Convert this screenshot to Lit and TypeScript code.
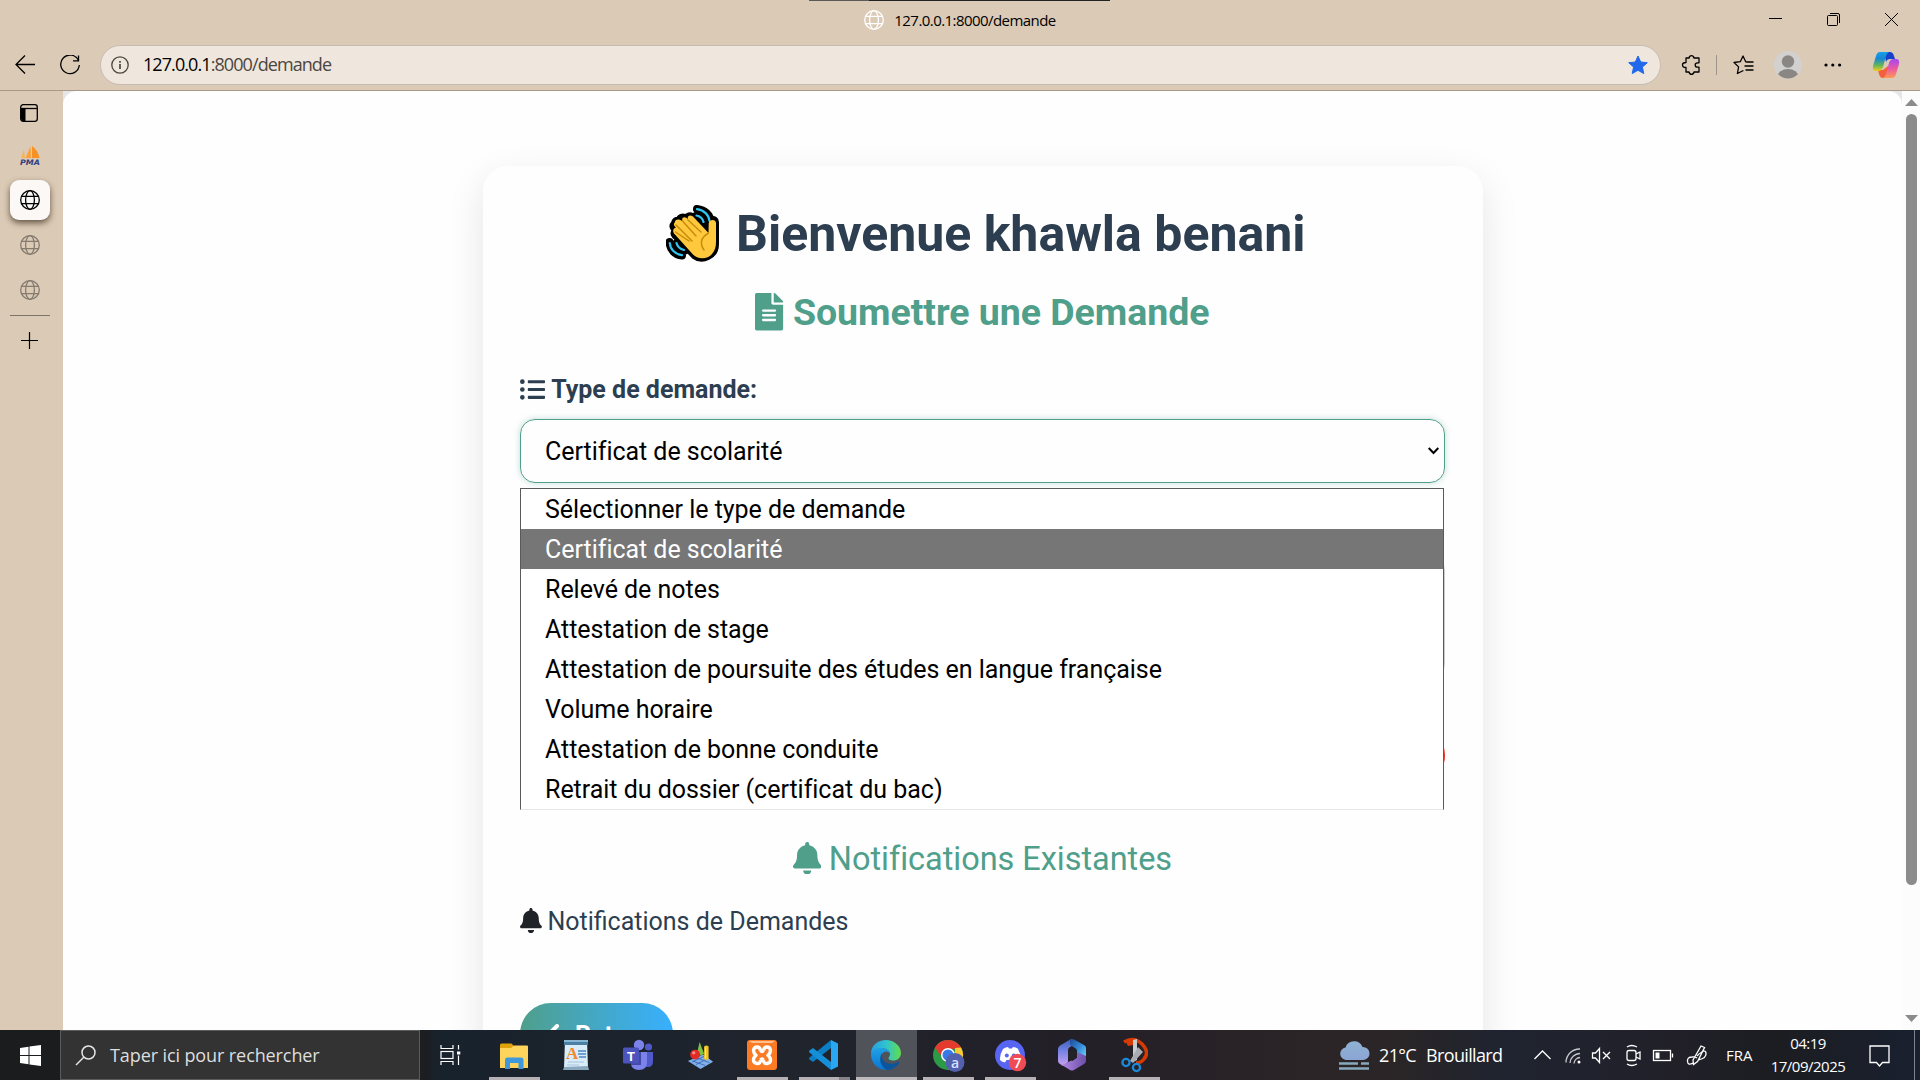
import { LitElement, html, css, TemplateResult } from "lit";
import { customElement, property, state } from "lit/decorators.js";
import { classMap } from "lit/directives/class-map.js";

const globe = html`<svg class="globe" width="20" height="20" viewBox="0 0 20 20" fill="none" stroke="currentColor" stroke-width="1.3">
  <circle cx="10" cy="10" r="9.3" /><ellipse cx="10" cy="10" rx="4.4" ry="9.3" /><path d="M1.4 6.4h17.2M1.4 13.6h17.2" />
</svg>`;

const bell = html`<svg class="fa bell" viewBox="0 0 448 512" fill="currentColor"><path d="M224 512c35.32 0 63.97-28.65 63.97-64H160.03c0 35.35 28.65 64 63.97 64zm215.39-149.71c-19.32-20.76-55.47-51.99-55.47-154.29 0-77.7-54.48-139.9-127.94-155.16V32c0-17.67-14.32-32-31.98-32s-31.98 14.33-31.98 32v20.84C118.56 68.1 64.08 130.3 64.08 208c0 102.3-36.15 133.53-55.47 154.29-6 6.45-8.66 14.16-8.61 21.71.11 16.4 12.98 32 32.1 32h383.8c19.12 0 32-15.6 32.1-32 .05-7.55-2.61-15.27-8.61-21.71z"/></svg>`;

const wave = html`<svg class="wave" width="53" height="57" viewBox="0 0 53 57" fill="none" stroke-linecap="round" stroke-linejoin="round">
  <g stroke="#000" stroke-width="8"><path d="M31 4C39 5 44 10 45 17M30 11C34 12 37 14 38 18M3.500 37C4 45 9 50 16 50.500M11 38C12 42 14 44 19 45.500" /></g>
  <path d="M8 18C5 21 7 24 9 25C6 28 8 31 11 33L28 51C36 57 50 52 50 39V17C50 13 43 13 43 18V26L26 11C23 9 20 12 20 13C17 10 13 12 13 15C10 14 8 16 8 18Z" fill="#000" stroke="#000" stroke-width="6" />
  <g stroke="#31c4f1" stroke-width="2.2"><path d="M31 4.200C38 5 43 10 43.500 16M30.500 10.500C34 11 37 14 37.500 17M3.800 38C4 44 9 49.500 16 50.200M10.500 38C11.500 42 14 44 18 45" /></g>
  <path d="M9 17C7 19 8 21 10 22.500C7 23 6 27 9 29.500L27 49.500C31 54 41 55 46 49C49 45.500 50 42 50 37V18C50 14 43 14 42.700 18.500L42.500 28L27 11.500C24 9 20.500 11 22 14.500C19 10.500 15 12.500 16.500 16C13 13.500 9 14 9 17Z" fill="#ffc83d" />
  <path d="M22 15L35 27M16.500 16L30 31M10 20L26 36M9.500 27L23 36M42.500 28C34 33 34 39 38 45" stroke="#c98b0a" stroke-width="1.500" />
</svg>`;

const apps: Record<string, TemplateResult> = {
  explorer: html`<svg width="30" height="30" viewBox="0 0 30 30"><path d="M1 5q0-1.500 1.500-1.500h10L15 6v5H1z" fill="#e0a10a"/><path d="M1 8h11l3-2.500h13q1 0 1 1V28H1z" fill="#ffd45c"/><path d="M6 29V20q0-2.500 2.500-2.500h13.500q2.500 0 2.500 2.500v9h-5v-6H11v6z" fill="#3f97dc"/></svg>`,
  wordpad: html`<svg width="28" height="34" viewBox="0 0 28 34"><path d="M3 2h22l1 28H2z" fill="#d8ecfa"/><path d="M2 2h24v5H2z" fill="#4b7fa6"/><path d="M2 2h24v2H2z" fill="#86b6d4"/><path d="M2 29l24-1 1 4H1z" fill="#8aa9bf"/><path d="M16 13h8M16 16h8M17 19h7" stroke="#4b86c5" stroke-width="1.500"/><path d="M6 24h16M5 27h12" stroke="#a9c4db"/><text x="4" y="21" font-family="Liberation Serif,serif" font-size="17" font-weight="700" fill="#f08a2c">A</text></svg>`,
  teams: html`<svg width="32" height="32" viewBox="0 0 32 32"><circle cx="17" cy="6" r="5.200" fill="#7b83eb"/><circle cx="26.500" cy="8" r="3.600" fill="#5059c9"/><path d="M21 13h10v9q0 6-5 6t-5-4z" fill="#5059c9"/><path d="M9 13h16v10q0 8-8 8t-8-7z" fill="#7b83eb"/><path d="M9 13h10v13H9z" fill="#4149a4"/><rect x="1" y="8.500" width="16" height="16" rx="1.500" fill="#4b53bc"/><text x="9" y="21.500" text-anchor="middle" font-family="Liberation Sans,sans-serif" font-size="13" font-weight="700" fill="#fff">T</text></svg>`,
  shapes: html`<svg width="27" height="27" viewBox="0 0 30 30"><path d="M1 21l17-7 11 8-14 8z" fill="#7fb0ea"/><path d="M6 21l14 5M12 18l13 5M10 25l14-7M6 22l13-6" stroke="#3c68b2"/><path d="M14 0l5 13q-5 4-8 0z" fill="#7dc242"/><circle cx="9" cy="14" r="5.500" fill="#e22b27"/><circle cx="7.500" cy="12" r="1.800" fill="#ff8c80"/><path d="M19 5q2.500-2 5 0v14q-2.500 2-5 0z" fill="#f4c327"/><path d="M20.500 6v12" stroke="#fff0a0"/></svg>`,
  xampp: html`<svg width="32" height="32" viewBox="0 0 32 32"><rect x="1" y="1" width="30" height="30" rx="3" fill="#fb7a24"/><path d="M3 2h26l-3 2H6z" fill="#ffc08f"/><path d="M14.500 11.500Q14 8 11 8T7.500 11.500Q7.500 14 10 16.300 7.500 18 7.500 21T11 24.500 14.500 21M17.500 11.500Q18 8 21 8t3.500 3.500q0 2.500-2.500 4.800 2.500 1.700 2.500 4.700T21 24.500 17.500 21M14.500 11.500q1.500 2 3 0M14.500 21q1.500-2 3 0" fill="none" stroke="#fff" stroke-width="3.400" stroke-linejoin="round"/></svg>`,
  vscode: html`<svg width="32" height="32" viewBox="0 0 32 32"><path d="M23 1L30 4.500v23L23 31z" fill="#2aa7f2"/><path d="M23 1v8L5 23 1.500 20.500q-1-1 0-2z" fill="#0b7ec4"/><path d="M23 31v-8L5 9 1.500 11.500q-1 1 0 2z" fill="#1590d8"/></svg>`,
  edge: html`<svg width="32" height="32" viewBox="0 0 32 32"><defs><linearGradient id="e1"><stop stop-color="#2a9de0"/><stop offset=".5" stop-color="#2fc3cf"/><stop offset="1" stop-color="#62dd4c"/></linearGradient><linearGradient id="e2" x2="0" y2="1"><stop stop-color="#1fa2e6"/><stop offset="1" stop-color="#0c74d0"/></linearGradient></defs><path d="M1 15C1 6 8 1 16 1s15 6 15 13c0 5-4 7.500-7.500 7.500-4 0-5-1.500-5-2.500 0-.7 1.500-1.500 1.500-4 0-3-3-5.500-7-5.500-6 0-12 3.500-12 5.500z" fill="url(#e1)"/><path d="M1 15c0-4 6-6 10-6 5 0 9 3 9 6-.5-1.500-2-2.500-4-2.500-4 0-5.500 5-4 9.500 1.500 4.800 5 8 8.500 8.300C10 33 1 26 1 15z" fill="url(#e2)"/><path d="M12 14c-1.500 8 6 14 16 9 1.500-.6 1.700.2 1 1.200C26 28 22 31 17.500 31 11 29 8 20 12 14z" fill="#0b559f"/></svg>`,
  chrome: html`<svg width="32" height="36" viewBox="0 0 32 36" overflow="visible"><circle cx="16" cy="18" r="15" fill="#2c9b48"/><g transform="translate(0 2)"><path d="M3 8.500A15 15 0 0 1 29 8.500L30 10H16L8 16z" fill="#e33b2e"/><path d="M29 8.500A15 15 0 0 1 16 31l7-12V9z" fill="#fcc934"/><circle cx="16" cy="16" r="7" fill="#fff"/><circle cx="16" cy="16" r="5.500" fill="#3b78e7"/><circle cx="23" cy="23.500" r="9.500" fill="#5261ad"/><text x="23" y="28.500" text-anchor="middle" font-family="Open Sans,sans-serif" font-size="14" font-weight="600" fill="#dbe1ff">a</text></g></svg>`,
  discord: html`<svg width="32" height="36" viewBox="0 0 32 36" overflow="visible"><g transform="translate(0 2)"><circle cx="16" cy="16" r="15" fill="#5865f2"/><path d="M9 10q3-2 5-2l1 1.500h3L19 8q3 0 5 2 3.500 6 3 11-2 2-5 2.500L20.500 21h-8L11 23.500Q8 23 6 21q-.5-5 3-11z" fill="#fff"/><circle cx="12.800" cy="16.500" r="2" fill="#5865f2"/><circle cx="19.800" cy="16.500" r="2" fill="#5865f2"/><circle cx="23.500" cy="23.500" r="8.700" fill="#ee4b54"/><text x="23.500" y="28.500" text-anchor="middle" font-family="Open Sans,sans-serif" font-size="14" font-weight="600" fill="#fff">7</text></g></svg>`,
  m365: html`<svg width="30" height="34" viewBox="0 0 30 34"><defs><linearGradient id="m1" x2="0" y2="1"><stop stop-color="#3d5fb8"/><stop offset=".4" stop-color="#6f7fe0"/><stop offset="1" stop-color="#c9a3f0"/></linearGradient><linearGradient id="m2" x2="1" y2="1"><stop stop-color="#1b4a94"/><stop offset=".5" stop-color="#3589d8"/><stop offset="1" stop-color="#6fdcf8"/></linearGradient><linearGradient id="m3" x2="1" y2="0"><stop stop-color="#b58ae6"/><stop offset="1" stop-color="#6a4fa8"/></linearGradient></defs><path d="M14 1L3 7.500Q1 9 1 11v12q0 2 2 3l3 2 5-4V12q0-2 2-3l7-4z" fill="url(#m1)"/><path d="M13 1.500q2-1 4 0L27 7q2 1 2 3v11l-9-5v-3q0-2-2-3l-5-3z" fill="url(#m2)"/><path d="M29 18v5q0 2-2 3l-10 6q-2 1-4 0L4 26.500q4 0 7-2.500l7-3q2-1 2-3v-4z" fill="url(#m3)"/><path d="M11 14l4.500-3.500L20 14v5.500L15.500 23 11 20z" fill="#222229"/></svg>`,
  snip: html`<svg width="28" height="36" viewBox="0 0 28 36"><path d="M4 5Q14-1 22 7t2 15q-3 4-8 4" fill="none" stroke="#d83b01" stroke-width="3.500"/><path d="M5 3l8-1v6L8 9z" fill="#d83b01"/><path d="M13 3l4-1v21l-4 2z" fill="#c9ccd0"/><path d="M18 10l5 5-10 11-3-2z" fill="#a9adb3"/><g fill="none" stroke="#1b8ad8" stroke-width="2.300"><circle cx="6" cy="25.500" r="3.600"/><circle cx="16.500" cy="30.500" r="3.600"/></g></svg>`,
};

/** Left rail with vertical tabs. */
@customElement("tab-rail")
class TabRail extends LitElement {
  static styles = css`
    :host { display: flex; flex-direction: column; align-items: center; width: 63px; height: 939px; padding: 3px 3px 0 0; box-sizing: border-box; background: #dbcab6; color: #000; flex: none; }
    .item { width: 40px; height: 40px; margin-bottom: 5px; display: flex; align-items: center; justify-content: center; border-radius: 9px; flex: none; }
    .layout { margin-bottom: 1px; height: 38px; padding-right: 2px; }
    .pma { height: 42px; margin-bottom: 5px; padding-top: 1px; box-sizing: border-box; }
    .active { background: #fbf8f5; box-shadow: 0 3px 6px rgba(60, 45, 30, 0.75); }
    .idle { color: #857b6f; }
    .rule { width: 40px; height: 1px; background: #7d7367; margin-bottom: 4px; }
    .add { padding-right: 2px; }
    svg { display: block; }
  `;
  render() {
    return html`
      <div class="item layout"><svg width="18" height="18" viewBox="0 0 18 18" fill="none" stroke="#000"><rect x=".7" y=".7" width="16.600" height="16.600" rx="2.500" stroke-width="1.300"/><path d="M1 4.500h16" stroke-width="1.300"/><path d="M1 5h4.500v12.500h-2Q1 17 1 15z" fill="#000" stroke="none"/></svg></div>
      <div class="item pma"><svg width="22" height="20" viewBox="0 0 22 20"><path d="M2 13L5 4.500 6 13z" fill="#f6b25c"/><path d="M6.500 13L11.500 1 12 13z" fill="#f9a13b"/><path d="M13 1Q19 5 20.500 13H13z" fill="#f79226"/><text x="1" y="19.500" font-family="DejaVu Sans,sans-serif" font-size="7.500" font-weight="700" font-style="italic" fill="#35407f" textLength="20" lengthAdjust="spacingAndGlyphs">PMA</text></svg></div>
      <div class="item active">${globe}</div>
      <div class="item idle">${globe}</div>
      <div class="item idle">${globe}</div>
      <div class="rule"></div>
      <div class="item add"><svg width="17" height="17" viewBox="0 0 17 17" stroke="#000" stroke-width="1.200"><path d="M8.500 0v17M0 8.500h17"/></svg></div>
    `;
  }
}

/** Title bar and address bar of the browser window. */
@customElement("browser-chrome")
class BrowserChrome extends LitElement {
  static styles = css`
    :host { display: block; height: 91px; box-sizing: border-box; border-bottom: 1px solid #ab9885; background: #dbcab6; font-family: "Open Sans", "Segoe UI", sans-serif; color: #000; }
    svg { display: block; flex: none; }
    .top { height: 45px; position: relative; display: flex; align-items: flex-start; justify-content: center; }
    .edge { position: absolute; left: 809px; top: 0; width: 301px; height: 1px; background: linear-gradient(90deg, #5c5a57 60px, #222 60px); }
    .title { display: flex; align-items: center; gap: 10px; height: 40px; font-size: 15px; letter-spacing: -0.56px; }
    .title .globe { color: #fff; }
    .controls { position: absolute; right: 22px; top: 13px; }
    .bar { height: 40px; display: flex; align-items: center; padding-left: 15px; }
    .refresh { margin-left: 25px; }
    .address { margin-left: 20px; width: 1561px; height: 40px; box-sizing: border-box; border: 1px solid #c6bcb2; border-radius: 20px; background: #efe7de; display: flex; align-items: center; padding: 0 12px 0 10px; font-size: 18px; letter-spacing: -0.92px; color: #4b4641; }
    .url { flex: 1; margin-left: 14px; padding-bottom: 2px; white-space: nowrap; }
    .host { color: #000; }
    .ext { margin-left: 20px; }
    .sep { width: 1px; height: 20px; background: #a0958a; margin-left: 15px; }
    .fav { margin-left: 16px; }
    .avatar { margin-left: 20px; }
    .more { margin-left: 22px; }
    .copilot { margin-left: 30px; }
  `;
  render() {
    return html`
      <div class="top">
        <div class="edge"></div>
        <div class="title">${globe}<span>127.0.0.1:8000/demande</span></div>
        <svg class="controls" width="129" height="13" viewBox="0 0 129 13" fill="none" stroke="#000" stroke-width="1">
          <path d="M0 5.500h13"/><rect x="58.500" y="2.500" width="10" height="10" rx="1"/><path d="M61 .500h8q1.500 0 1.500 1.500v8"/><path d="M116 0l13 13M129 0l-13 13"/>
        </svg>
      </div>
      <div class="bar">
        <svg width="20" height="20" viewBox="0 0 20 20" fill="none" stroke="#000" stroke-width="1.300"><path d="M20 9.500H1M10 .500L1 9.500l9 9"/></svg>
        <svg class="refresh" width="20" height="20" viewBox="0 0 20 20" fill="none" stroke="#000" stroke-width="1.300"><path d="M18.500 5.500A9.300 9.300 0 1 0 19.300 10M18.500.500v5.300h-5.500"/></svg>
        <div class="address">
          <svg width="18" height="18" viewBox="0 0 18 18" fill="none" stroke="#4b4641" stroke-width="1.300"><circle cx="9" cy="9" r="8.200"/><path d="M9 8v5M9 5v1.700" stroke-width="1.700"/></svg>
          <span class="url"><span class="host">127.0.0.1</span>:8000/demande</span>
          <svg width="20" height="20" viewBox="0 0 20 20" fill="#2169eb" stroke="#2169eb" stroke-linejoin="round"><path d="M10 1l2.700 6 6.600.700-4.900 4.400 1.400 6.500-5.800-3.300-5.800 3.300 1.400-6.500L.700 7.700 7.300 7z"/></svg>
        </div>
        <svg class="ext" width="20" height="20" viewBox="0 0 20 20" fill="none" stroke="#000" stroke-width="1.300" stroke-linejoin="round"><path d="M5 3h3q.500-2.300 2.500-2.300T13 3h5v4.800h-1.500q-2.300 0-2.300 2.200t2.300 2.200H18V17h-5q-.500 2.300-2.500 2.300T8 17H5v-4.500Q1.500 12.500 1.500 10T5 7.500z"/></svg>
        <div class="sep"></div>
        <svg class="fav" width="21" height="20" viewBox="0 0 21 20" fill="none" stroke="#000" stroke-width="1.300" stroke-linejoin="round"><path d="M15 6.800h-2.300L10 1 7.300 6.700 1 7.500l4.600 4.400-1.200 6.600 6-3M11.500 11h9M13.500 7h7M12.500 15h8"/></svg>
        <svg class="avatar" width="28" height="28" viewBox="0 0 28 28"><defs><clipPath id="av"><circle cx="14" cy="14" r="13.500"/></clipPath></defs><circle cx="14" cy="14" r="14" fill="#d2d1cf"/><g fill="#8a8683" clip-path="url(#av)"><circle cx="14" cy="10.500" r="6.200"/><ellipse cx="14" cy="25.500" rx="10.500" ry="7.500"/></g></svg>
        <svg class="more" width="18" height="4" viewBox="0 0 18 4"><circle cx="2" cy="2" r="1.600"/><circle cx="8.800" cy="2" r="1.600"/><circle cx="15.600" cy="2" r="1.600"/></svg>
        <svg class="copilot" width="28" height="28" viewBox="0 0 28 28"><defs><linearGradient id="c1" x2="0" y2="1"><stop stop-color="#17a0e8"/><stop offset=".35" stop-color="#1787d4"/><stop offset=".7" stop-color="#63b557"/><stop offset="1" stop-color="#f5cc1c"/></linearGradient><linearGradient id="c2" x2="0" y2="1"><stop stop-color="#a347f5"/><stop offset=".5" stop-color="#ea58a5"/><stop offset="1" stop-color="#ff9a52"/></linearGradient></defs><path d="M12 1h6q3 0 4 4l1 3h-5q-3 0-4 3z" fill="#1841c9"/><path d="M16 27h-5q-3 0-4-4l-1-4h5l5-4z" fill="#f4603b"/><path d="M8 1h9q-2 1-3 4l-3 11q-1 4-5 4H4q-4 0-3-5L4 5Q5 1 8 1z" fill="url(#c1)"/><path d="M20 27h-9q2-1 3-4l3-11q1-4 5-4h2q4 0 3 5l-3 10q-1 4-4 4z" fill="url(#c2)"/></svg>
      </div>
    `;
  }
}

/** Card with the request form. */
@customElement("request-page")
class RequestPage extends LitElement {
  @state() private selected = 1;
  private options = [
    "Sélectionner le type de demande", "Certificat de scolarité", "Relevé de notes", "Attestation de stage",
    "Attestation de poursuite des études en langue française", "Volume horaire", "Attestation de bonne conduite",
    "Retrait du dossier (certificat du bac)",
  ];
  static styles = css`
    :host { display: flex; justify-content: center; flex: 1; height: 939px; overflow: hidden; box-sizing: border-box; padding-top: 75px; background: #fefefe; border-radius: 14px 14px 0 0; font-family: Roboto, sans-serif; color: #2c3e50; }
    .card { width: 1000px; height: 1100px; box-sizing: border-box; padding: 37.5px 38px 37.5px 37px; margin-left: 1px; border-radius: 25px; background: #fefefe; box-shadow: 0 12.5px 37.5px rgba(0, 0, 0, 0.1); display: flex; flex-direction: column; flex: none; }
    .fa { height: 1em; flex: none; display: block; }
    h1, h2, h3, h4, label { margin: 0; display: flex; align-items: center; font-weight: 400; white-space: nowrap; }
    h1 { font-size: 50px; line-height: 60px; font-weight: 700; justify-content: center; padding-left: 6px; color: #2c3e50; }
    .wave { margin: 0 17.5px 0 0; flex: none; }
    h2 span, h3 span, h4 span, label span, .value { padding-top: 2px; }
    h2 { font-size: 37.5px; line-height: 45px; font-weight: 700; justify-content: center; gap: 9.3px; margin-top: 24.8px; color: #4f9f8b; letter-spacing: -0.04px; }
    label { font-size: 25px; line-height: 37.5px; font-weight: 700; gap: 6.2px; margin-top: 34px; }
    .picker { position: relative; margin-top: 10px; height: 64px; box-sizing: border-box; border: 1px solid #4f9f8b; border-radius: 15px; box-shadow: 0 0 6px rgba(79, 159, 139, 0.35); padding: 0 5px 0 24px; display: flex; align-items: center; justify-content: space-between; font-size: 25px; letter-spacing: -0.03px; color: #000; }
    .options { position: absolute; z-index: 2; left: -1px; top: 68px; width: 924px; height: 322px; box-sizing: border-box; border: 1px solid #5a5a5a; border-bottom-color: #e5e5e5; background: #fff; }
    .option { height: 40px; line-height: 42px; padding-left: 24px; white-space: nowrap; }
    .option.on { background: #767676; color: #fff; }
    .note { margin-top: 72px; height: 124px; box-sizing: border-box; border: 1px solid #ccc; border-radius: 15px; }
    .send { margin-top: 48px; height: 57px; border-radius: 29px; background: #ee2a16; }
    h3 { font-size: 32.5px; line-height: 40px; justify-content: center; gap: 7.5px; margin-top: 53px; color: #4f9f8b; letter-spacing: -0.04px; }
    h4 { font-size: 25px; line-height: 30px; gap: 5.5px; margin-top: 26px; }
    h4 .bell { color: #1f2327; }
    .back { margin-top: 66px; width: 153px; height: 62px; border-radius: 31px; background: linear-gradient(90deg, #4f9f8b, #38b0ff); display: flex; align-items: center; padding: 4px 0 0 26px; gap: 15px; box-sizing: border-box; color: #fff; font-weight: 700; font-size: 25px; flex: none; }
    .back svg { margin-top: -4px; }
  `;
  render() {
    return html`
      <section class="card">
        <h1>${wave}<span class="name">Bienvenue khawla benani</span></h1>
        <h2><svg class="fa" viewBox="0 0 384 512" fill="currentColor"><path d="M224 136V0H24C10.700 0 0 10.700 0 24v464c0 13.300 10.700 24 24 24h336c13.300 0 24-10.700 24-24V160H248c-13.200 0-24-10.800-24-24zm64 236c0 6.600-5.400 12-12 12H108c-6.600 0-12-5.400-12-12v-8c0-6.600 5.400-12 12-12h168c6.600 0 12 5.400 12 12v8zm0-64c0 6.600-5.400 12-12 12H108c-6.600 0-12-5.400-12-12v-8c0-6.600 5.400-12 12-12h168c6.600 0 12 5.400 12 12v8zm0-72v8c0 6.600-5.400 12-12 12H108c-6.600 0-12-5.400-12-12v-8c0-6.600 5.400-12 12-12h168c6.600 0 12 5.400 12 12zm96-114.100v6.100H256V0h6.100c6.400 0 12.500 2.500 17 7l97.900 98c4.500 4.500 7 10.600 7 16.900z"/></svg><span>Soumettre une Demande</span></h2>
        <label><svg class="fa" viewBox="0 0 512 512" fill="currentColor"><path d="M48 48a48 48 0 1 0 48 48 48 48 0 0 0-48-48zm0 160a48 48 0 1 0 48 48 48 48 0 0 0-48-48zm0 160a48 48 0 1 0 48 48 48 48 0 0 0-48-48zm448 16H176a16 16 0 0 0-16 16v32a16 16 0 0 0 16 16h320a16 16 0 0 0 16-16v-32a16 16 0 0 0-16-16zm0-320H176a16 16 0 0 0-16 16v32a16 16 0 0 0 16 16h320a16 16 0 0 0 16-16V80a16 16 0 0 0-16-16zm0 160H176a16 16 0 0 0-16 16v32a16 16 0 0 0 16 16h320a16 16 0 0 0 16-16v-32a16 16 0 0 0-16-16z"/></svg><span>Type de demande:</span></label>
        <div class="picker">
          <span class="value">${this.options[this.selected]}</span>
          <svg width="11" height="8" viewBox="0 0 11 8" fill="none" stroke="#000" stroke-width="2"><path d="M.700 1l4.800 5 4.800-5"/></svg>
          <div class="options">
            ${this.options.map((o, i) => html`<div class=${classMap({ option: true, on: i === this.selected })} @click=${() => (this.selected = i)}>${o}</div>`)}
          </div>
        </div>
        <div class="note"></div>
        <div class="send"></div>
        <h3>${bell}<span>Notifications Existantes</span></h3>
        <h4>${bell}<span>Notifications de Demandes</span></h4>
        <div class="back"><svg width="14" height="20" viewBox="0 0 14 20" fill="none" stroke="#fff" stroke-width="4" stroke-linecap="round" stroke-linejoin="round"><path d="M11 2L3 10l8 8"/></svg><span>Retour</span></div>
      </section>
    `;
  }
}

/** One pinned application on the taskbar. */
@customElement("task-app")
class TaskApp extends LitElement {
  @property() name = "";
  @property() mode = "";
  static styles = css`
    :host { display: flex; width: 62px; height: 50px; justify-content: center; flex: none; }
    svg { display: block; }
    .cell { position: relative; width: 61px; height: 50px; display: flex; align-items: center; justify-content: center; }
    .focus { background: #50535a; }
    .line { position: absolute; bottom: 0; left: 5px; right: 5px; height: 3px; background: #b6b1b5; }
    .focus .line { left: 0; right: 0; background: #bdb9bc; }
    .multi .line { background: linear-gradient(90deg, #b6b1b5 40px, #85828a 40px); }
  `;
  render() {
    return html`<div class="cell ${this.mode}">${apps[this.name]}${this.mode ? html`<div class="line"></div>` : ""}</div>`;
  }
}

@customElement("task-bar")
class TaskBar extends LitElement {
  static styles = css`
    :host { display: flex; height: 50px; color: #fff; font-family: "Open Sans", "Segoe UI", sans-serif; background: linear-gradient(90deg, #1b1c1d 0, #1c1d1e 420px, #18222c 440px, #20242d 800px, #221f27 1060px, #2c2527 1330px, #2a2527 1400px, #1f2430 1500px, #212029 1680px, #1b1d21 1780px, #1a2030 1920px); }
    svg { display: block; flex: none; }
    .start { width: 60px; display: flex; align-items: center; justify-content: center; }
    .search { width: 360px; box-sizing: border-box; border: 1px solid #5b5b5b; background: #333; color: #dedede; display: flex; align-items: center; padding-left: 14px; gap: 14px; font-size: 18px; letter-spacing: -0.1px; white-space: nowrap; }
    .view { width: 60px; display: flex; align-items: center; justify-content: center; }
    .apps { display: flex; margin-left: 3px; width: 856px; }
    .weather { display: flex; align-items: center; font-size: 18px; letter-spacing: -0.65px; white-space: nowrap; width: 195px; }
    .weather span + span { margin-left: 10px; }
    .weather svg { margin-right: 9px; }
    .tray { display: flex; align-items: center; width: 192px; }
    .lang { display: flex; align-items: center; font-size: 15px; width: 44px; }
    .clock { display: flex; flex-direction: column; align-items: center; font-size: 15px; letter-spacing: -0.5px; line-height: 23px; width: 76px; padding-top: 2px; box-sizing: border-box; }
    .note { margin: 15px 0 0 23px; }
    .desk { margin-left: auto; width: 5px; border-left: 1px solid #80838a; }
  `;
  render() {
    const list: [string, string][] = [
      ["explorer", "open"], ["wordpad", ""], ["teams", ""], ["shapes", ""], ["xampp", "open"], ["vscode", "multi"],
      ["edge", "focus"], ["chrome", "open"], ["discord", "open"], ["m365", ""], ["snip", "open"],
    ];
    return html`
      <div class="start"><svg width="21" height="21" viewBox="0 0 21 21" fill="#fff"><path d="M0 3l8.500-1.200V10H0zM9.500 1.600L21 0v10H9.500zM0 11h8.500v8.200L0 18zM9.500 11H21v10L9.500 19.400z"/></svg></div>
      <div class="search"><svg width="21" height="21" viewBox="0 0 21 21" fill="none" stroke="#e6e6e6" stroke-width="1.500"><circle cx="13.500" cy="7.500" r="6.500"/><path d="M9 12L1 20"/></svg><span>Taper ici pour rechercher</span></div>
      <div class="view"><svg width="21" height="20" viewBox="0 0 21 20" fill="none" stroke="#fff" stroke-width="1.200"><path d="M1 0v3.500h12V0M1 20v-3.500h12V20"/><rect x="1" y="6.500" width="12" height="7"/><path d="M18.500 0v4.500M18.500 10.500V20"/><path d="M17 6.500h3.300v3H17z" fill="#fff" stroke="none"/></svg></div>
      <div class="apps">${list.map(([n, m]) => html`<task-app name=${n} mode=${m}></task-app>`)}</div>
      <div class="weather">
        <svg width="31" height="30" viewBox="0 0 31 30"><defs><linearGradient id="w" x2="0" y2="1"><stop stop-color="#8fb1d3"/><stop offset="1" stop-color="#8ba5d4"/></linearGradient></defs><path d="M7 20a6.300 6.300 0 0 1-.500-12.500A9 9 0 0 1 23.500 7a6.500 6.500 0 0 1 1 13z" fill="url(#w)"/><path d="M0 23.500h19M22 23.500h8M0 28.500h30" stroke="#87a9bd" stroke-width="2.600"/></svg>
        <span>21°C</span><span>Brouillard</span>
      </div>
      <div class="tray">
        <svg width="180" height="24" viewBox="0 0 180 24" fill="none" stroke="#fff" stroke-width="1.300">
          <path d="M.500 16L8.500 8l8 8"/>
          <path d="M32 19.500A13.500 13.500 0 0 1 46 6M36 20A10 10 0 0 1 46 10.500M40 20.500A6.500 6.500 0 0 1 46 14.500" stroke="#c9c9cc"/><circle cx="45" cy="19" r="1.500" fill="#fff" stroke="none"/>
          <path d="M58.500 10h3l4-4.500v14l-4-4.500h-3zM69 9l7 7M76 9l-7 7"/>
          <rect x="93" y="7.500" width="9" height="10" rx="2"/><path d="M102 11l4-2v7l-4-2M93 4q4.500-3 10 0M93 21q4.500 3 10 0"/>
          <rect x="119.500" y="7.500" width="17" height="10"/><path d="M138.500 10.500v4" /><path d="M121.500 9.500h4v6h-4z" fill="#fff" stroke="none"/>
          <path d="M159 20q-5 3-5.500-1.500T158 14q3-.500 5 1M159 17L167 3l3.500 1.500-7 14-4 3zM163 13q8-8 9-3t-8 7"/>
        </svg>
      </div>
      <div class="lang">FRA</div>
      <div class="clock"><span>04:19</span><span>17/09/2025</span></div>
      <svg class="note" width="21" height="22" viewBox="0 0 21 22" fill="none" stroke="#fff" stroke-width="1.300"><path d="M1 1h19v16.500h-6.500L10.500 21l-3-3.500H1z"/></svg>
      <div class="desk"></div>
    `;
  }
}

@customElement("app-root")
class AppRoot extends LitElement {
  static styles = css`
    :host { display: flex; flex-direction: column; width: 1920px; height: 1080px; overflow: hidden; background: #dbcab6; }
    .body { display: flex; height: 939px; background: #e6e6e8; }
    .scroll { width: 18px; background: #fcfcfc; display: flex; flex-direction: column; align-items: center; box-sizing: border-box; padding: 8px 0; }
    .thumb { width: 11px; height: 771px; border-radius: 6px; background: #8b8b8b; margin-top: 8px; margin-bottom: auto; }
    .scroll svg { display: block; }
  `;
  render() {
    return html`
      <browser-chrome></browser-chrome>
      <div class="body">
        <tab-rail></tab-rail>
        <request-page></request-page>
        <div class="scroll">
          <svg width="13" height="7" viewBox="0 0 13 7"><path d="M6.500 0L13 7H0z" fill="#8b8b8b"/></svg>
          <div class="thumb"></div>
          <svg width="13" height="7" viewBox="0 0 13 7"><path d="M6.500 7L13 0H0z" fill="#8b8b8b"/></svg>
        </div>
      </div>
      <task-bar></task-bar>
    `;
  }
}
